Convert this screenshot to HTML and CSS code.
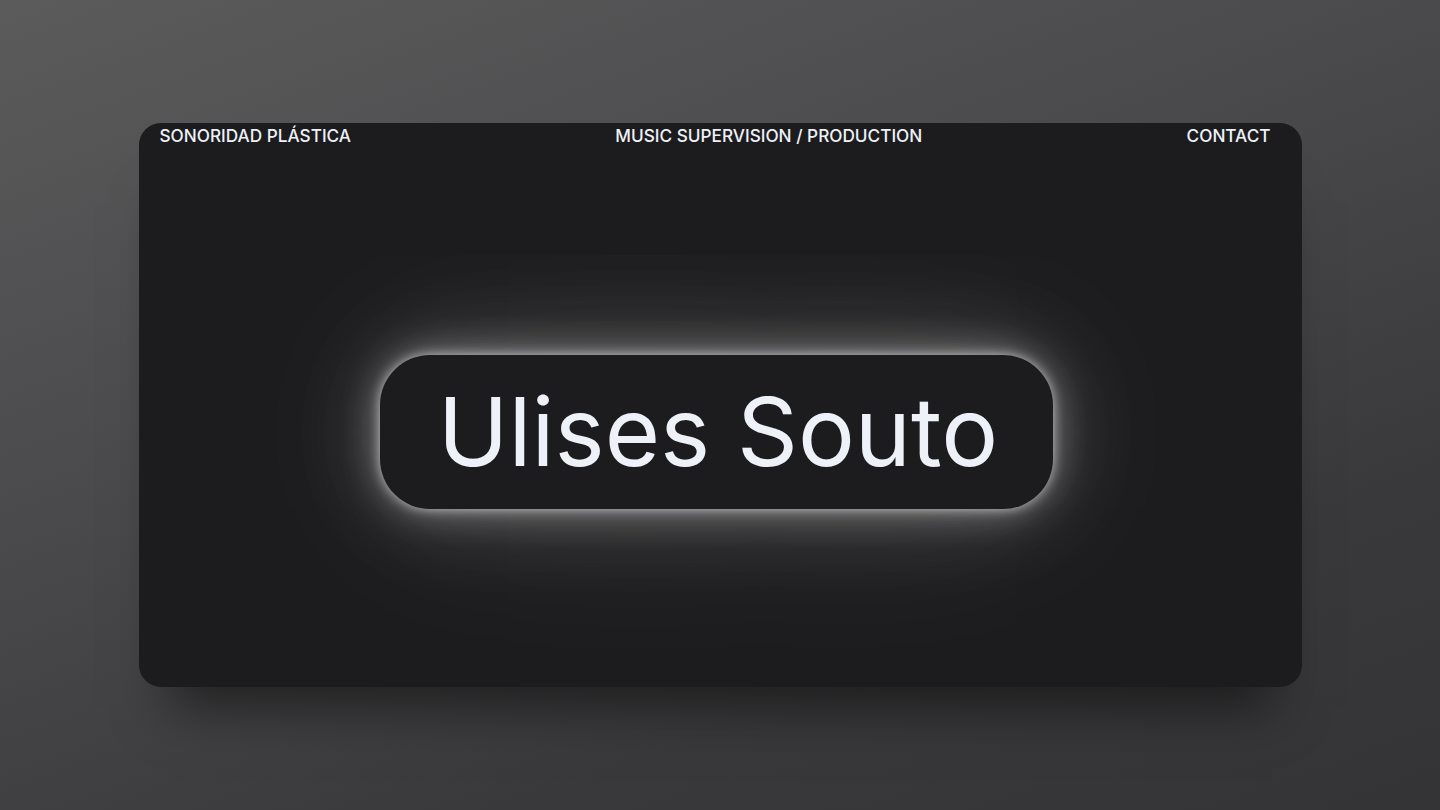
FILE: index.html
```html
<!DOCTYPE html>
<html lang="es">
<head>
<meta charset="utf-8">
<title>Ulises Souto</title>
<link rel="stylesheet" href="styles.css">
</head>
<body>
<div class="page">
  <section class="card">
    <nav class="nav">
      <a class="nav-link" href="#">SONORIDAD PLÁSTICA</a>
      <a class="nav-link" href="#">MUSIC SUPERVISION / PRODUCTION</a>
      <a class="nav-link" href="#">CONTACT</a>
    </nav>
    <main class="stage">
      <h1 class="pill">Ulises Souto</h1>
    </main>
  </section>
</div>
</body>
</html>
```
FILE: styles.css
```css
* { box-sizing: border-box; }
html, body { margin: 0; padding: 0; }
body {
  width: 1440px;
  height: 810px;
  overflow: hidden;
  font-family: Inter, "Liberation Sans", sans-serif;
  background: linear-gradient(160deg, #5b5b5c 0%, #4a4a4c 40%, #39393b 75%, #343436 100%);
}
.page {
  width: 1440px;
  height: 810px;
  display: flex;
  align-items: center;
  justify-content: center;
}
.card {
  width: 1163px;
  height: 564px;
  background: #1c1c1e;
  border-radius: 22px;
  display: flex;
  flex-direction: column;
  box-shadow: 0 50px 50px -30px rgba(0, 0, 0, 0.5);
  overflow: hidden;
}
.nav {
  height: 25px;
  display: flex;
  justify-content: space-between;
  align-items: center;
  padding: 0 31px 0 21px;
}
.nav-link {
  color: #eef2f8;
  text-decoration: none;
  font-size: 17.2px;
  font-weight: 450;
  letter-spacing: 0;
}
.stage {
  flex: 1;
  display: flex;
  align-items: center;
  justify-content: center;
  padding: 29px 8px 0 0;
}
.pill {
  margin: 0;
  width: 673px;
  height: 154px;
  border-radius: 50px;
  background: #1c1c1f;
  color: #eef2f8;
  font-size: 95px;
  font-weight: 400;
  display: flex;
  align-items: center;
  justify-content: center;
  padding: 0 0 2px 4px;
  box-shadow:
    0 0 12px rgba(255, 255, 255, 0.6),
    0 0 40px rgba(255, 255, 255, 0.4),
    0 0 100px rgba(255, 255, 255, 0.2),
    0 0 200px rgba(255, 255, 255, 0.1);
}
```
